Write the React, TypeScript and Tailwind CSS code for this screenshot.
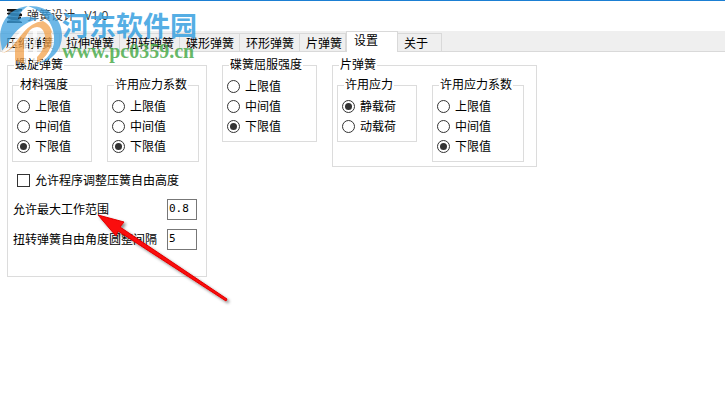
import { useState, type ReactNode } from "react";

const TABS = [
  { name: "压缩弹簧", width: "w-[60px]" },
  { name: "拉伸弹簧", width: "w-[60px]" },
  { name: "扭转弹簧", width: "w-[60px]" },
  { name: "碟形弹簧", width: "w-[60px]" },
  { name: "环形弹簧", width: "w-[60px]" },
  { name: "片弹簧", width: "w-[46px]" },
  { name: "设置", width: "w-[52px]" },
  { name: "关于", width: "w-11" },
];

const LIMITS = ["上限值", "中间值", "下限值"];

function Group({ title, className, children }: { title: string; className: string; children: ReactNode }) {
  return (
    <fieldset className={`min-w-0 border border-[#dcdcdc] ${className}`}>
      <legend className="ml-0.5 h-[15px] px-px leading-[15px] whitespace-nowrap">{title}</legend>
      {children}
    </fieldset>
  );
}

function RadioGroup({
  id,
  title,
  options,
  initial,
  className,
}: {
  id: string;
  title: string;
  options: string[];
  initial: string;
  className: string;
}) {
  const [value, setValue] = useState(initial);
  return (
    <Group title={title} className={`px-1 pt-[3px] pb-[5px] ${className}`}>
      {options.map((option) => (
        <label key={option} className="flex h-5 items-center gap-[5px] whitespace-nowrap">
          <input
            type="radio"
            name={id}
            checked={value === option}
            onChange={() => setValue(option)}
            className="m-0 size-[13px] shrink-0 appearance-none rounded-full border border-[#333] bg-white bg-clip-content p-[2px] checked:bg-[#333]"
          />
          <span className="pt-0.5">{option}</span>
        </label>
      ))}
    </Group>
  );
}

function NumberRow({ id, label, value }: { id: string; label: string; value: string }) {
  return (
    <div className="flex h-[30px] items-center justify-between pr-[5px] pl-px">
      <label htmlFor={id} className="pt-0.5 whitespace-nowrap">{label}</label>
      <input
        id={id}
        type="text"
        defaultValue={value}
        className="h-[21px] w-[30px] border border-[#777] bg-white px-px pb-0.5 font-['DejaVu_Sans_Mono','Noto_Sans_CJK_SC',monospace] text-[11px] leading-4 text-black outline-none"
      />
    </div>
  );
}

function Watermark() {
  return (
    <div className="pointer-events-none absolute top-0 left-0 flex items-start" aria-hidden="true">
      <svg width="62" height="66" viewBox="0 0 62 66" fill="none">
        <g opacity="0.75">
          <path d="M1 43C-3 23 9 7 28 5C22 9 19 13 18 18C24 15 31 15 38 18C24 21 15 30 9 40C7 44 4 47 2 50Z" fill="#3ba0e0" />
          <path d="M28 5C47 4 62 17 62 34C62 49 52 60 37 63C47 57 53 49 54 39C55 24 45 11 28 5Z" fill="#3ba0e0" />
          <path d="M2 50C10 47 16 39 22 31C28 24 35 20 43 20C51 24 54 32 52 42C50 51 44 58 37 62V56C43 50 46 43 45 35C44 29 41 26 37 26C30 27 27 31 27 38V63C23 63 19 61 15 59V45C11 48 7 51 3 52Z" fill="#f3a24b" />
          <path d="M2 50C11 46 15 35 24 27C31 21 38 19 43 20C35 21 29 25 23 32C16 40 11 49 3 52Z" fill="white" />
          <path d="M24 38L28 32V63L24 62ZM33 30H37V61L33 63Z" fill="white" />
          <path d="M38 63C48 55 54 45 51 31L54 35C55 48 49 58 38 63Z" fill="white" />
        </g>
      </svg>
      <div className="pt-2 whitespace-nowrap">
        <div className="h-8 font-['Noto_Sans_CJK_SC',sans-serif] text-[27px] leading-8 font-bold text-[#36a0df]/85">
          河东软件园
        </div>
        <div className="font-['Liberation_Serif',serif] text-xl leading-5 font-bold text-[#4bac4d]/85">
          www.pc0359.cn
        </div>
      </div>
    </div>
  );
}

function Arrow() {
  return (
    <svg
      className="pointer-events-none absolute top-[204px] left-[90px]"
      width="150"
      height="105"
      viewBox="0 0 150 105"
      aria-hidden="true"
    >
      <defs>
        <filter id="arrow-shadow" x="-20%" y="-20%" width="140%" height="140%">
          <feDropShadow dx="2" dy="2" stdDeviation="1.5" floodColor="#000" floodOpacity="0.45" />
        </filter>
      </defs>
      <path
        d="M8 10L34 17L30 22L137 94L136 96L28 26L26 31Z"
        fill="#fa0a0a"
        stroke="#e00000"
        strokeWidth="1"
        strokeLinejoin="round"
        filter="url(#arrow-shadow)"
      />
    </svg>
  );
}

export default function App() {
  const [active, setActive] = useState("设置");
  const [adjust, setAdjust] = useState(false);
  return (
    <div className="relative min-h-screen overflow-hidden border-t border-[#1b7fd3] bg-white font-['Liberation_Sans','Noto_Sans_CJK_SC',sans-serif] text-xs text-black">
      <header className="flex h-[30px] items-center gap-[5px] pl-[7px]">
        <svg width="15" height="16" viewBox="0 0 15 16" aria-hidden="true">
          <path
            d="M0 1H15V3L11 4L15 6V8L11 9H14V11L11 12L15 14V15H0V13L4 12L0 10V9L4 8L0 6V5L4 4L0 3Z"
            fill="#151515"
          />
          <path d="M1 4L13 5M1 8L13 9M1 12L13 13" stroke="#667985" strokeWidth="1" />
        </svg>
        <h1 className="font-['Open_Sans','Noto_Sans_CJK_SC',sans-serif] whitespace-pre text-[#333]">
          弹簧设计{"   "}V1.0
        </h1>
      </header>

      <div role="tablist" className="flex h-[21px] items-end bg-[#efefef] shadow-[inset_0_-1px_#d9d9d9]">
        {TABS.map(({ name, width }, index) => {
          const look =
            name === active
              ? "h-[21px] border-x border-t bg-white pb-px pl-[7px]"
              : `mb-px h-[18px] border-t border-r bg-[#efefef] pt-0.5 ${index === 0 ? "border-l pl-[5px]" : "pl-1.5"}`;
          return (
            <button
              key={name}
              type="button"
              role="tab"
              aria-selected={name === active}
              onClick={() => setActive(name)}
              className={`shrink-0 border-[#d9d9d9] text-left leading-[17px] whitespace-nowrap ${width} ${look}`}
            >
              {name}
            </button>
          );
        })}
      </div>

      <main className="flex items-start gap-[15px] px-[7px] pt-1.5">
        <Group title="螺旋弹簧" className="w-[200px] shrink-0 px-1 pt-[5px] pb-[22px]">
          <div className="flex items-start gap-[15px]">
            <RadioGroup id="material" title="材料强度" options={LIMITS} initial="下限值" className="w-20" />
            <RadioGroup id="helical-stress" title="许用应力系数" options={LIMITS} initial="下限值" className="w-[92px]" />
          </div>
          <label className="mt-2 mb-1 flex h-5 items-center gap-[5px] pl-[5px] whitespace-nowrap">
            <input
              type="checkbox"
              checked={adjust}
              onChange={(event) => setAdjust(event.target.checked)}
              className="m-0 size-[13px] shrink-0 appearance-none border border-[#333] bg-white bg-clip-content p-[2px] checked:bg-[#333]"
            />
            <span className="pt-0.5">允许程序调整压簧自由高度</span>
          </label>
          <NumberRow id="max-range" label="允许最大工作范围" value="0.8" />
          <NumberRow id="angle-step" label="扭转弹簧自由角度圆整间隔" value="5" />
        </Group>

        <RadioGroup id="disc-yield" title="碟簧屈服强度" options={LIMITS} initial="下限值" className="w-[95px] shrink-0" />

        <Group title="片弹簧" className="w-[205px] shrink-0 px-1 pt-[5px] pb-1">
          <div className="flex items-start gap-[15px]">
            <RadioGroup id="leaf-load" title="许用应力" options={["静载荷", "动载荷"]} initial="静载荷" className="w-20" />
            <RadioGroup id="leaf-stress" title="许用应力系数" options={LIMITS} initial="下限值" className="w-[92px]" />
          </div>
        </Group>
      </main>

      <Watermark />
      <Arrow />
    </div>
  );
}
